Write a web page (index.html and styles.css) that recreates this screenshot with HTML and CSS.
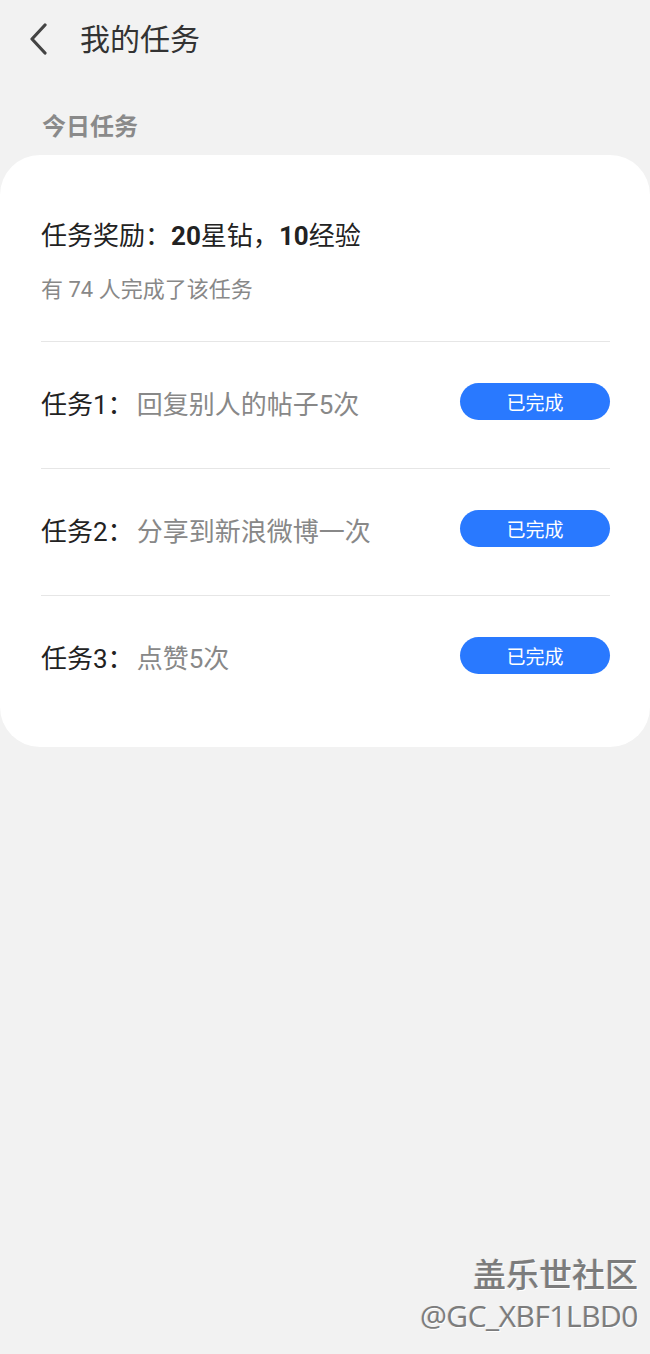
FILE: index.html
```html
<!DOCTYPE html>
<html lang="zh">
<head>
<meta charset="utf-8">
<title>我的任务</title>
<link rel="stylesheet" href="styles.css">
</head>
<body>
<div class="page">
  <header class="topbar">
    <span class="back">
      <svg width="24" height="32" viewBox="0 0 24 32"><path d="M16 2 L3 16 L16 30" fill="none" stroke="#444" stroke-width="3.2" stroke-linecap="round" stroke-linejoin="round"/></svg>
    </span>
    <h1 class="title">我的任务</h1>
  </header>

  <div class="section-title">今日任务</div>

  <section class="card">
    <div class="reward">
      <div class="reward-title">任务奖励：<b>20</b>星钻，<b>10</b>经验</div>
      <div class="reward-sub">有 74 人完成了该任务</div>
    </div>
    <div class="task">
      <div class="task-text"><span class="task-label">任务1：</span><span class="task-desc">回复别人的帖子5次</span></div>
      <span class="btn">已完成</span>
    </div>
    <div class="task">
      <div class="task-text"><span class="task-label">任务2：</span><span class="task-desc">分享到新浪微博一次</span></div>
      <span class="btn">已完成</span>
    </div>
    <div class="task last">
      <div class="task-text"><span class="task-label">任务3：</span><span class="task-desc">点赞5次</span></div>
      <span class="btn">已完成</span>
    </div>
  </section>

  <div class="watermark">
    <div class="wm-1">盖乐世社区</div>
    <div class="wm-2">@GC_XBF1LBD0</div>
  </div>
</div>
</body>
</html>
```

FILE: styles.css
```css
html, body {
  margin: 0;
  padding: 0;
}
body {
  background: #f2f2f2;
  font-family: Roboto, "Noto Sans CJK SC", sans-serif;
  width: 650px;
  height: 1354px;
  overflow: hidden;
  text-spacing-trim: space-all;
}
.page {
  position: relative;
  height: 1354px;
}
.topbar {
  display: flex;
  align-items: center;
  height: 80px;
  padding-left: 29px;
}
.back {
  display: flex;
  width: 24px;
  height: 32px;
  margin-top: -2px;
}
.title {
  margin: 0 0 0 27px;
  font-size: 30px;
  font-weight: 400;
  color: #333;
  line-height: 1;
}
.section-title {
  padding-left: 42px;
  margin-top: 30px;
  height: 45px;
  line-height: 34px;
  font-size: 24px;
  font-weight: 700;
  color: #8a8a8a;
}
.card {
  background: #fff;
  border-radius: 40px;
  padding: 0 40px 25px 41px;
}
.reward {
  padding-top: 64px;
  padding-bottom: 37px;
  border-bottom: 1px solid #e6e6e6;
}
.reward-title {
  font-size: 26px;
  line-height: 34px;
  color: #222;
}
.reward-title b {
  font-weight: 700;
}
.reward-sub {
  margin-top: 23px;
  font-size: 22px;
  line-height: 28px;
  color: #888;
}
.task {
  display: flex;
  align-items: center;
  justify-content: space-between;
  height: 126px;
  border-bottom: 1px solid #e6e6e6;
}
.task.last {
  border-bottom: none;
}
.task-text {
  font-size: 26px;
  line-height: 34px;
}
.task-label {
  color: #222;
}
.task-desc {
  color: #888;
  margin-left: 3px;
}
.btn {
  display: flex;
  align-items: center;
  justify-content: center;
  width: 150px;
  height: 37px;
  border-radius: 19px;
  background: #2979ff;
  color: #fff;
  font-size: 19px;
  margin-top: -7px;
}
.watermark {
  position: absolute;
  right: 12px;
  top: 1250px;
  text-align: right;
  color: #7c7c7c;
  font-family: "Noto Sans CJK SC", sans-serif;
  text-shadow: 1px 1px 0 #fff, -1px 0 0 #e0e0e0;
}
.wm-1 {
  font-size: 33px;
  font-weight: 500;
  line-height: 46px;
}
.wm-2 {
  font-family: "Open Sans", "Noto Sans CJK SC", sans-serif;
  font-size: 30px;
  line-height: 40px;
  letter-spacing: -0.5px;
}
```
